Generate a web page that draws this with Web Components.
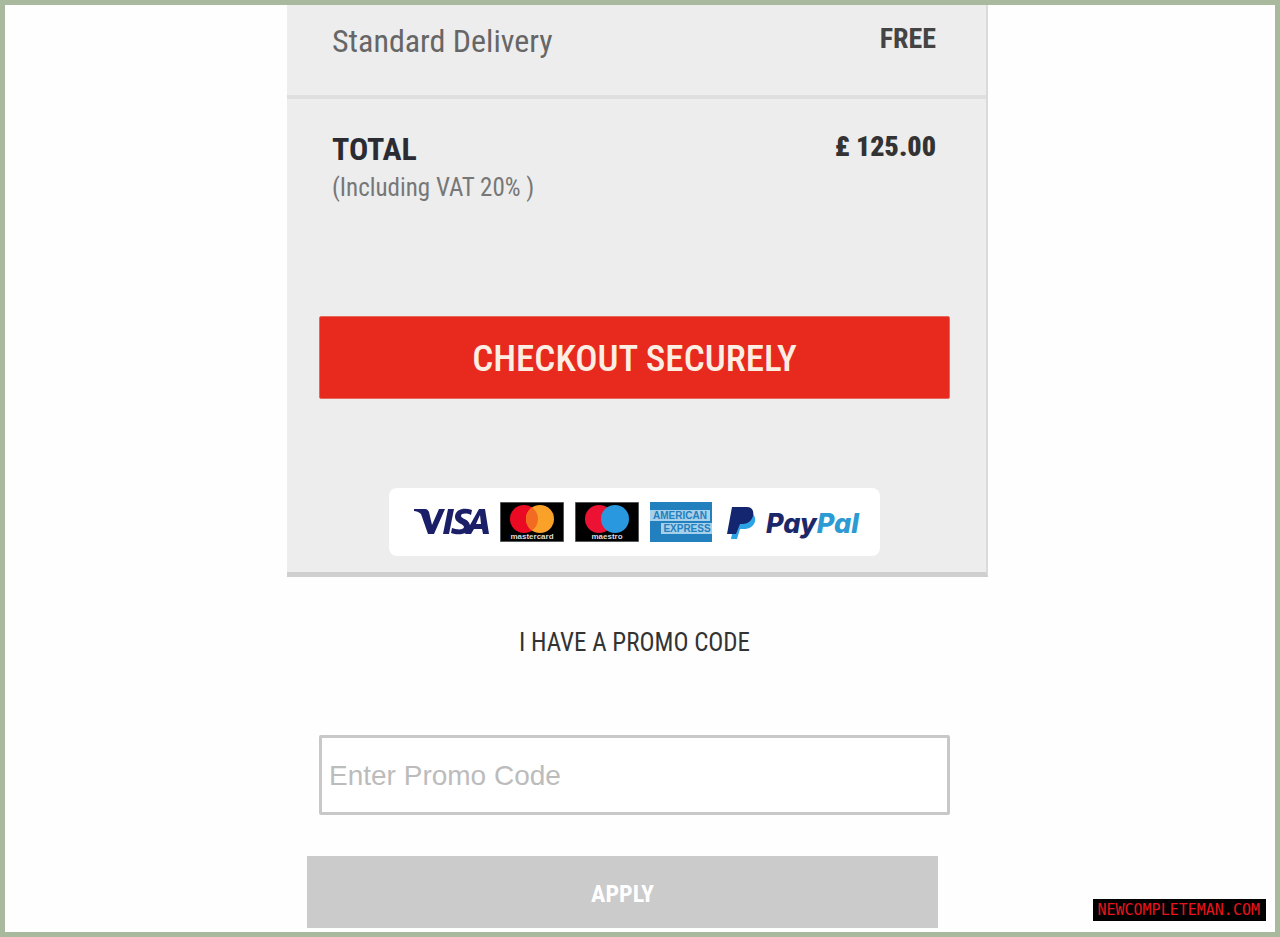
<!DOCTYPE html>
<html lang="en">
<head>
<meta charset="utf-8">
<meta name="viewport" content="width=device-width, initial-scale=1">
<title>Basket summary</title>
<style>
body { margin: 0; --narrow: "Roboto Condensed", "Arial Narrow", sans-serif; font-family: var(--narrow); }
</style>
</head>
<body>
<basket-page>
  <order-summary>
    <summary-row slot="rows"><span>Standard Delivery</span><b slot="value">FREE</b></summary-row>
    <summary-row slot="rows" total><span>TOTAL</span><b slot="value">£ 125.00</b><span slot="note">(Including VAT 20% )</span></summary-row>
    <checkout-button slot="action">CHECKOUT SECURELY</checkout-button>
    <payment-methods slot="action"></payment-methods>
  </order-summary>
  <promo-form></promo-form>
  <site-tag slot="tag">NEWCOMPLETEMAN.COM</site-tag>
</basket-page>

<script>
const define = (name, html) => customElements.define(name, class extends HTMLElement {
  constructor() {
    super();
    this.attachShadow({ mode: "open" }).innerHTML = html;
  }
});

define("basket-page", `
<style>
:host { display: flex; flex-direction: column; align-items: center; box-sizing: border-box; min-height: 100vh; border: 5px solid #a8b99e; background: #fefefe; }
main { width: 100%; max-width: 706px; box-sizing: border-box; padding-right: 5px; }
</style>
<main><slot></slot></main><slot name="tag"></slot>`);

define("order-summary", `
<style>
:host { display: block; background: #ededed; border-right: 2px solid #dadada; border-bottom: 5px solid #cfcfcf; }
.actions { display: flex; flex-direction: column; align-items: center; gap: 89px; padding: 109px 36px 16px 32px; }
</style>
<slot name="rows"></slot>
<div class="actions"><slot name="action"></slot></div>`);

define("summary-row", `
<style>
:host { display: grid; grid-template-columns: 1fr auto; padding: 16px 50px 34px 45px; border-bottom: 4px solid #dfdfdf; font-size: 32px; line-height: 40px; color: #666; }
:host([total]) { padding: 30px 50px 0 45px; border: 0; color: #2b2c33; font-weight: bold; }
.value { font-size: 28px; line-height: 36px; color: #444; }
:host([total]) .value { color: #333; }
.note { grid-column: 1 / -1; font-size: 25px; line-height: 38px; font-weight: normal; color: #777; }
:host(:not([total])) .note { display: none; }
</style>
<slot></slot><span class="value"><slot name="value"></slot></span><span class="note"><slot name="note"></slot></span>`);

define("checkout-button", `
<style>
:host { display: block; width: 100%; }
button { display: block; width: 100%; height: 83px; padding: 2px 0 0; border: 1px solid #e5685f; border-radius: 2px; background: #e72a1d; color: #fdeee4; font: 500 37px/40px var(--narrow); cursor: pointer; }
</style>
<button type="button"><slot></slot></button>`);

define("payment-methods", `
<style>
:host { display: flex; align-items: center; gap: 11px; box-sizing: border-box; width: 491px; max-width: 100%; height: 68px; padding-left: 25px; border-radius: 8px; background: #fff; }
svg { display: block; flex: none; }
text { font-family: "Liberation Sans", sans-serif; font-weight: bold; }
.brand { font-family: Inter, sans-serif; font-style: italic; font-weight: 800; }
</style>
<svg width="75" height="40" viewBox="0 0 75 40" role="img" aria-label="Visa">
  <path fill="#1b1f68" d="M0 7h11c2 0 3 1 4 3l3 13 7-16h6L20 32h-6L7 12C5 10 2 9 0 9zM34 7h6l-5 25h-6zM58 8l-1 5c-4-2-10-2-10 1s9 3 9 10c0 8-11 10-19 7l1-5c5 2 12 2 12-1s-9-4-9-10c0-8 9-10 17-7zM65 7h6l4 25h-6l-1-5h-8l-3 5h-6zM66 13l-4 9h5z"/>
</svg>
<svg width="64" height="40" viewBox="0 0 64 40" role="img" aria-label="Mastercard">
  <path fill="#000" stroke="#55585b" d="M.5.5h63v39H.5z"/>
  <circle cx="24" cy="17" r="14" fill="#eb0a23"/><circle cx="40" cy="17" r="14" fill="#f9a129"/>
  <path fill="#f36b21" d="M32 5.500a14 14 0 0 1 0 23a14 14 0 0 1 0-23z"/>
  <text x="32" y="37" font-size="8" fill="#ddd" text-anchor="middle">mastercard</text>
</svg>
<svg width="64" height="40" viewBox="0 0 64 40" role="img" aria-label="Maestro">
  <path fill="#000" stroke="#55585b" d="M.5.5h63v39H.5z"/>
  <circle cx="24" cy="17" r="14" fill="#eb1233"/><circle cx="40" cy="17" r="14" fill="#2998df"/>
  <text x="32" y="37" font-size="8" fill="#ddd" text-anchor="middle">maestro</text>
</svg>
<svg width="62" height="40" viewBox="0 0 62 40" role="img" aria-label="American Express">
  <path fill="#2180bd" d="M0 0h62v40H0z"/>
  <path fill="#a7d0eb" d="M0 8h60v11H0zM11 21h51v11H11z"/>
  <text x="30" y="17" font-size="10" fill="#2180bd" text-anchor="middle">AMERICAN</text>
  <text x="37" y="30" font-size="10" fill="#2180bd" text-anchor="middle">EXPRESS</text>
</svg>
<svg width="142" height="40" viewBox="0 0 142 40" role="img" aria-label="PayPal">
  <path fill="#2ba3e4" d="M13 12h17c5 6 1 15-9 15h-4l-3 10H8z"/>
  <path fill="#14266f" d="M9 5h15c7 0 8 8 4 13-3 4-7 4-11 4l-4 10H4z"/>
  <text class="brand" x="43" y="31" font-size="27" fill="#1c2769">Pay<tspan fill="#2c9ad3">Pal</tspan></text>
</svg>`);

define("promo-form", `
<style>
:host { display: block; }
form { display: flex; flex-direction: column; padding: 46px 38px 4px 32px; }
label { text-align: center; font-size: 25px; line-height: 40px; color: #333; }
input { box-sizing: border-box; width: 100%; height: 80px; margin: 72px 0 41px; padding: 2px 7px 0; border: 3px solid #c8c8c8; border-radius: 2px; background: #fff; color: #444; font: 28px/36px "Liberation Sans", sans-serif; }
input::placeholder { color: #bcbcbc; opacity: 1; }
button { height: 72px; margin: 0 12px 0 -12px; padding: 4px 0 0; border: 0; background: #cbcbcb; color: #fff; font: bold 24px/36px var(--narrow); }
</style>
<form onsubmit="return false">
  <label for="code">I HAVE A PROMO CODE</label>
  <input id="code" type="text" placeholder="Enter Promo Code">
  <button type="submit">APPLY</button>
</form>`);

define("site-tag", `
<style>
:host { position: fixed; right: 14px; bottom: 16px; padding: 0 6px 0 4px; background: #000; color: #e8141c; font: 15px/22px "DejaVu Sans Mono", monospace; }
</style>
<slot></slot>`);
</script>
</body>
</html>
